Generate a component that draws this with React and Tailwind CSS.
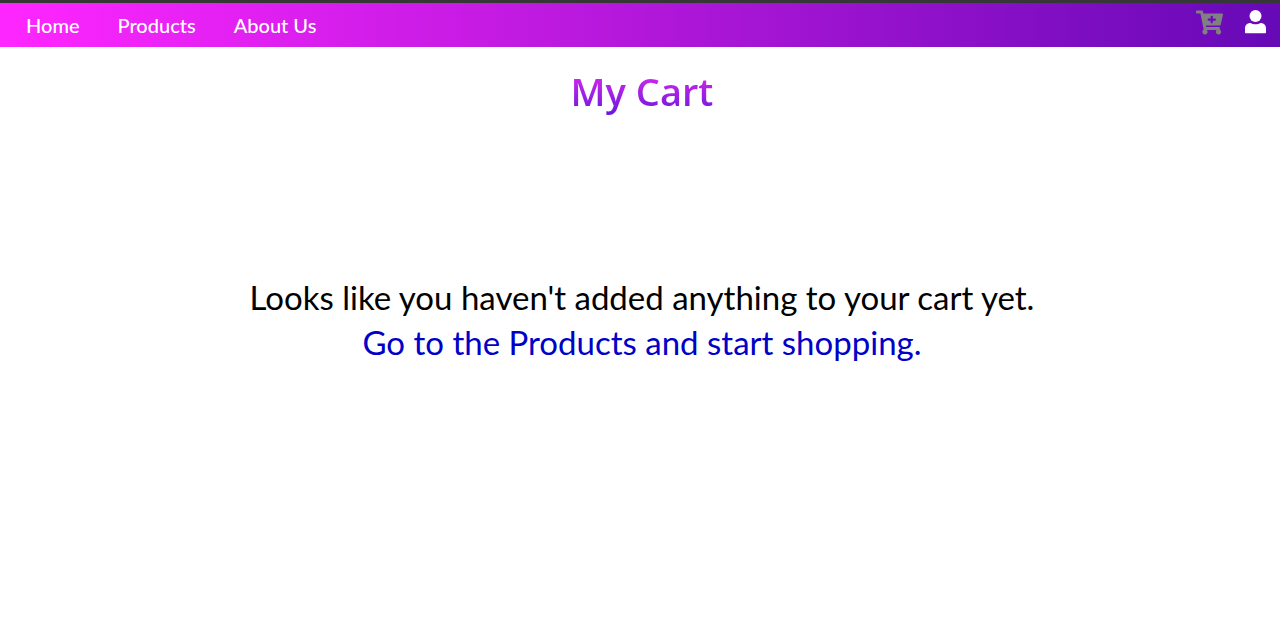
import { FaCartPlus } from "react-icons/fa";

function UserIcon() {
  return (
    <svg width="21" height="24" viewBox="0 0 21 24" fill="currentColor" aria-hidden="true">
      <circle cx="10.5" cy="6" r="6" />
      <path d="M5.500 13C2.200 13 0 15.200 0 18.400V22.600Q0 23.200.6 23.200H20.400Q21 23.200 21 22.600V18.400C21 15.200 18.800 13 15.500 13C14.200 13.800 12.500 14.300 10.500 14.300S6.800 13.800 5.500 13Z" />
    </svg>
  );
}

export default function App() {
  return (
    <div className="min-h-screen bg-white font-['Lato','Open_Sans',sans-serif] text-black">
      <header className="flex items-start justify-between border-t-3 border-[#363636] bg-linear-to-r/srgb from-[#ff26ff] to-[#6609b6] pr-3.5 pl-6.5 text-white">
        <nav className="flex items-center gap-9.5 text-xl leading-[44px] font-medium">
          <a href="#home">Home</a>
          <a href="#products">Products</a>
          <a href="#about">About Us</a>
        </nav>
        <div className="flex items-start gap-5.5 pt-1.5">
          <a href="#cart" aria-label="Cart" className="text-[#808080]"><FaCartPlus size={27} /></a>
          <a href="#account" aria-label="Account" className="pt-px"><UserIcon /></a>
        </div>
      </header>
      <main className="flex flex-col items-center pl-1 text-center">
        <h1 className="mt-4 bg-linear-to-b/srgb from-[#f42bf0] to-[#5c18dc] bg-clip-text font-['Open_Sans',sans-serif] text-[38px] leading-14 font-semibold text-transparent">My Cart</h1>
        <section className="mt-39 text-[33px] leading-[45px]">
          <p>Looks like you haven't added anything to your cart yet.</p>
          <a href="#products" className="text-[#0000c8]">Go to the Products and start shopping.</a>
        </section>
      </main>
    </div>
  );
}
